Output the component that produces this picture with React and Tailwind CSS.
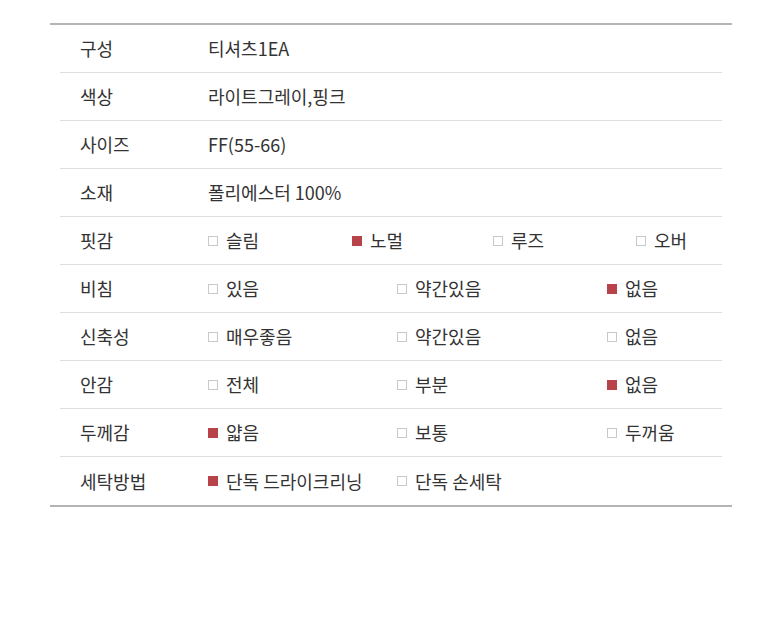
import React from "react";

const F = { fontFamily: '"Noto Sans CJK KR", "Noto Sans", sans-serif' };

function Opt({ label, on }) {
  return (
    <div className="flex items-center">
      <span
        className={
          on
            ? "w-[10px] h-[10px] bg-[#b8424a] mr-[8px] shrink-0"
            : "w-[10px] h-[10px] border border-[#c9c9c9] bg-white mr-[8px] shrink-0"
        }
      />
      <span>{label}</span>
    </div>
  );
}

const rows = [
  { label: "구성", text: "티셔츠1EA" },
  { label: "색상", text: "라이트그레이,핑크" },
  { label: "사이즈", text: "FF(55-66)" },
  { label: "소재", text: "폴리에스터 100%" },
  { label: "핏감", four: true, opts: [["슬림", 0], ["노멀", 1], ["루즈", 0], ["오버", 0]] },
  { label: "비침", opts: [["있음", 0], ["약간있음", 0], ["없음", 1]] },
  { label: "신축성", opts: [["매우좋음", 0], ["약간있음", 0], ["없음", 0]] },
  { label: "안감", opts: [["전체", 0], ["부분", 0], ["없음", 1]] },
  { label: "두께감", opts: [["얇음", 1], ["보통", 0], ["두꺼움", 0]] },
  { label: "세탁방법", opts: [["단독 드라이크리닝", 1], ["단독 손세탁", 0]] },
];

export default function App() {
  return (
    <div className="w-[780px] h-[620px] bg-white pt-[23px] text-[18px] text-[#333]" style={F}>
      <div className="ml-[50px] w-[682px] border-t-2 border-b-2 border-[#b4b4b4]">
        <div className="mx-[10px]">
          {rows.map((r, i) => (
            <div
              key={r.label}
              className={
                "h-[48px] flex items-center pl-[20px] " +
                (i < rows.length - 1 ? "border-b border-[#dedede]" : "")
              }
            >
              <div className="w-[128px] shrink-0">{r.label}</div>
              {r.text ? (
                <div>{r.text}</div>
              ) : r.four ? (
                <div className="grid grid-cols-[144px_141px_143px_1fr] flex-1">
                  {r.opts.map(([l, on]) => (
                    <Opt key={l} label={l} on={on} />
                  ))}
                </div>
              ) : (
                <div className="grid grid-cols-[189px_210px_1fr] flex-1">
                  {r.opts.map(([l, on]) => (
                    <Opt key={l} label={l} on={on} />
                  ))}
                </div>
              )}
            </div>
          ))}
        </div>
      </div>
    </div>
  );
}
